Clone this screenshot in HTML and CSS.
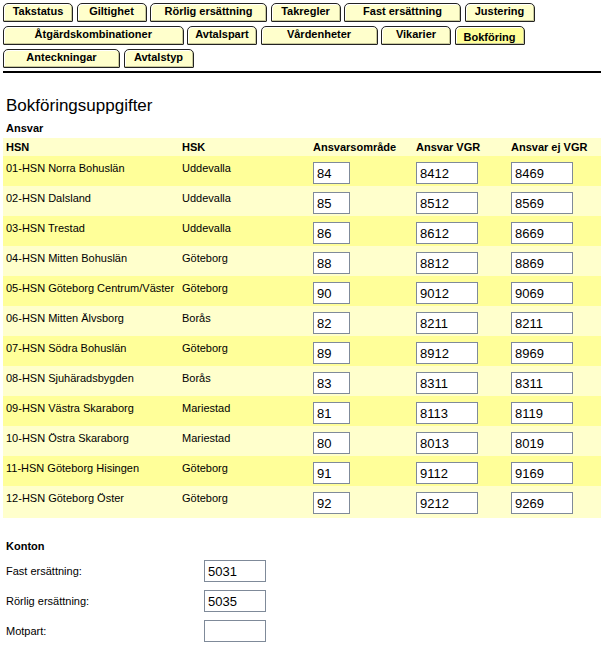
FILE: index.html
```html
<!DOCTYPE html>
<html lang="sv">
<head>
<meta charset="utf-8">
<title>Bokföring</title>
<link rel="stylesheet" href="styles.css">
</head>
<body>
<nav class="tabs">
  <div class="tab-row">
    <span class="tab s">Takstatus</span>
    <span class="tab s">Giltighet</span>
    <span class="tab m">Rörlig ersättning</span>
    <span class="tab s">Takregler</span>
    <span class="tab m">Fast ersättning</span>
    <span class="tab s">Justering</span>
  </div>
  <div class="tab-row">
    <span class="tab l">Åtgärdskombinationer</span>
    <span class="tab s">Avtalspart</span>
    <span class="tab m">Vårdenheter</span>
    <span class="tab s">Vikarier</span>
    <span class="tab s active">Bokföring</span>
  </div>
  <div class="tab-row">
    <span class="tab m">Anteckningar</span>
    <span class="tab s">Avtalstyp</span>
  </div>
</nav>
<div class="rule"></div>

<h1 class="title">Bokföringsuppgifter</h1>
<div class="section-label">Ansvar</div>
<table class="grid">
  <colgroup>
    <col class="c1"><col class="c2"><col class="c3"><col class="c4"><col class="c5">
  </colgroup>
  <thead>
    <tr><th>HSN</th><th>HSK</th><th>Ansvarsområde</th><th>Ansvar VGR</th><th>Ansvar ej VGR</th></tr>
  </thead>
  <tbody>
    <tr class="odd"><td>01-HSN Norra Bohuslän</td><td>Uddevalla</td><td><input class="in-s" value="84"></td><td><input class="in-m" value="8412"></td><td><input class="in-m" value="8469"></td></tr>
    <tr class="even"><td>02-HSN Dalsland</td><td>Uddevalla</td><td><input class="in-s" value="85"></td><td><input class="in-m" value="8512"></td><td><input class="in-m" value="8569"></td></tr>
    <tr class="odd"><td>03-HSN Trestad</td><td>Uddevalla</td><td><input class="in-s" value="86"></td><td><input class="in-m" value="8612"></td><td><input class="in-m" value="8669"></td></tr>
    <tr class="even"><td>04-HSN Mitten Bohuslän</td><td>Göteborg</td><td><input class="in-s" value="88"></td><td><input class="in-m" value="8812"></td><td><input class="in-m" value="8869"></td></tr>
    <tr class="odd"><td>05-HSN Göteborg Centrum/Väster</td><td>Göteborg</td><td><input class="in-s" value="90"></td><td><input class="in-m" value="9012"></td><td><input class="in-m" value="9069"></td></tr>
    <tr class="even"><td>06-HSN Mitten Älvsborg</td><td>Borås</td><td><input class="in-s" value="82"></td><td><input class="in-m" value="8211"></td><td><input class="in-m" value="8211"></td></tr>
    <tr class="odd"><td>07-HSN Södra Bohuslän</td><td>Göteborg</td><td><input class="in-s" value="89"></td><td><input class="in-m" value="8912"></td><td><input class="in-m" value="8969"></td></tr>
    <tr class="even"><td>08-HSN Sjuhäradsbygden</td><td>Borås</td><td><input class="in-s" value="83"></td><td><input class="in-m" value="8311"></td><td><input class="in-m" value="8311"></td></tr>
    <tr class="odd"><td>09-HSN Västra Skaraborg</td><td>Mariestad</td><td><input class="in-s" value="81"></td><td><input class="in-m" value="8113"></td><td><input class="in-m" value="8119"></td></tr>
    <tr class="even"><td>10-HSN Östra Skaraborg</td><td>Mariestad</td><td><input class="in-s" value="80"></td><td><input class="in-m" value="8013"></td><td><input class="in-m" value="8019"></td></tr>
    <tr class="odd"><td>11-HSN Göteborg Hisingen</td><td>Göteborg</td><td><input class="in-s" value="91"></td><td><input class="in-m" value="9112"></td><td><input class="in-m" value="9169"></td></tr>
    <tr class="even"><td>12-HSN Göteborg Öster</td><td>Göteborg</td><td><input class="in-s" value="92"></td><td><input class="in-m" value="9212"></td><td><input class="in-m" value="9269"></td></tr>
  </tbody>
</table>

<div class="konton">
  <div class="section-label">Konton</div>
  <div class="form-row"><span class="form-label">Fast ersättning:</span><input class="in-m" value="5031"></div>
  <div class="form-row"><span class="form-label">Rörlig ersättning:</span><input class="in-m" value="5035"></div>
  <div class="form-row"><span class="form-label">Motpart:</span><input class="in-m" value=""></div>
</div>
</body>
</html>
```
FILE: styles.css
```css
html, body {
  margin: 0;
  padding: 0;
  background: #fff;
}
body {
  padding: 3px 3px 0 3px;
  font-family: "Liberation Sans", Arial, sans-serif;
  font-size: 11px;
  color: #000;
}
.tabs {
  display: flex;
  flex-direction: column;
  gap: 4px;
}
.tab-row {
  display: flex;
  gap: 3.5px;
}
.tab {
  box-sizing: border-box;
  height: 19px;
  border: 1px solid #222;
  border-radius: 5px 5px 1px 1px;
  background: #ffffcc;
  box-shadow: inset -1px -1px 0 #c8c89a, inset 1px 1px 0 #ffffff;
  font-weight: bold;
  font-size: 11px;
  display: flex;
  align-items: center;
  justify-content: center;
  padding-bottom: 3px;
}
.tab.s { width: 70px; }
.tab.m { width: 117px; }
.tab.l { width: 180.5px; }
.tab.active { background: #ffff99; padding-bottom: 0; padding-top: 2px; }
.rule {
  margin-top: 3px;
  width: 598px;
  height: 2px;
  background: #000;
}
.title {
  margin: 23px 0 0 3px;
  font-size: 17px;
  font-weight: normal;
  line-height: 19px;
}
.section-label {
  margin: 7px 0 0 3px;
  font-weight: bold;
  line-height: 13px;
}
.grid {
  margin-top: 3px;
  width: 598px;
  border-collapse: collapse;
  table-layout: fixed;
}
.c1 { width: 176px; }
.c2 { width: 131px; }
.c3 { width: 103px; }
.c4 { width: 95px; }
.c5 { width: 93px; }
.grid th {
  background: #ffffcc;
  text-align: left;
  font-weight: bold;
  padding: 3px 3px 2px 3px;
  height: 13px;
  line-height: 13px;
}
.grid td {
  vertical-align: top;
  padding: 6px 3px 2px 3px;
  line-height: 13px;
  height: 22px;
}
.grid tr.odd td { background: #ffff99; }
.grid tr.even td { background: #ffffcc; }
.grid tbody tr:last-child td { padding-bottom: 4px; }
input {
  box-sizing: border-box;
  height: 22px;
  margin: 0;
  border: 1px solid #7f8a99;
  padding: 1px 3px 0 3px;
  font-family: "Liberation Sans", Arial, sans-serif;
  font-size: 13px;
  background: #fff;
  display: block;
}
.in-s { width: 37px; }
.in-m { width: 62px; }
.konton {
  margin-top: 22px;
}
.konton .section-label { margin-bottom: 3px; }
.form-row {
  display: flex;
  align-items: center;
  height: 30px;
}
.form-label {
  width: 198px;
  padding-left: 3px;
}
```
